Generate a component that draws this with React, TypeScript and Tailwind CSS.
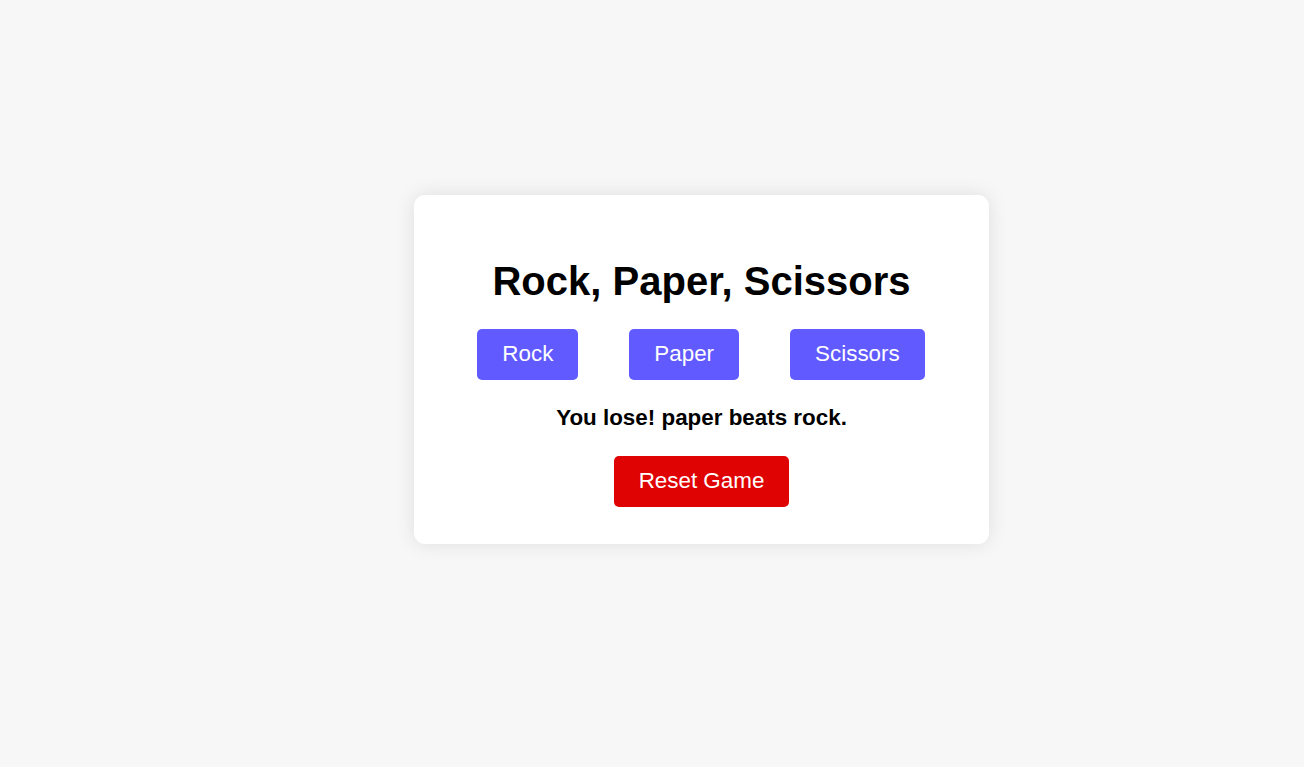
import { useState } from 'react';

const CHOICES = ['rock', 'paper', 'scissors'] as const;
type Choice = (typeof CHOICES)[number];

const LABELS: Record<Choice, string> = { rock: 'Rock', paper: 'Paper', scissors: 'Scissors' };
const BEATS: Record<Choice, Choice> = { rock: 'scissors', paper: 'rock', scissors: 'paper' };

export default function App() {
  const [result, setResult] = useState('You lose! paper beats rock.');

  const play = (player: Choice) => {
    const cpu = CHOICES[Math.floor(Math.random() * 3)];
    if (cpu === player) setResult(`It's a tie! You both chose ${player}.`);
    else if (BEATS[player] === cpu) setResult(`You win! ${player} beats ${cpu}.`);
    else setResult(`You lose! ${cpu} beats ${player}.`);
  };

  return (
    <div className="min-h-screen bg-[#f7f7f7] pl-[414px] pt-[195px] font-['Liberation_Sans',Arial,sans-serif] text-black">
      <div className="flex w-[575px] flex-col items-center rounded-[11px] bg-white pt-[63px] pb-[37px] shadow-[0_0_20px_rgba(0,0,0,0.1)]">
        <h1 className="text-[40px] leading-[46px] font-bold">Rock, Paper, Scissors</h1>
        <div className="mt-[25px] flex gap-[51px] pr-[1px]">
          {CHOICES.map((c) => (
            <button
              key={c}
              onClick={() => play(c)}
              className="h-[51px] rounded-[5px] bg-[#615bff] px-[25px] pb-[2px] text-[22.4px] text-white"
            >
              {LABELS[c]}
            </button>
          ))}
        </div>
        <p className="mt-[25px] text-[22.4px] leading-[26px] font-bold">{result}</p>
        <button
          onClick={() => setResult('')}
          className="mt-[25px] h-[51px] rounded-[5px] bg-[#e00303] px-[25px] pb-[2px] text-[22.4px] text-white"
        >
          Reset Game
        </button>
      </div>
    </div>
  );
}
